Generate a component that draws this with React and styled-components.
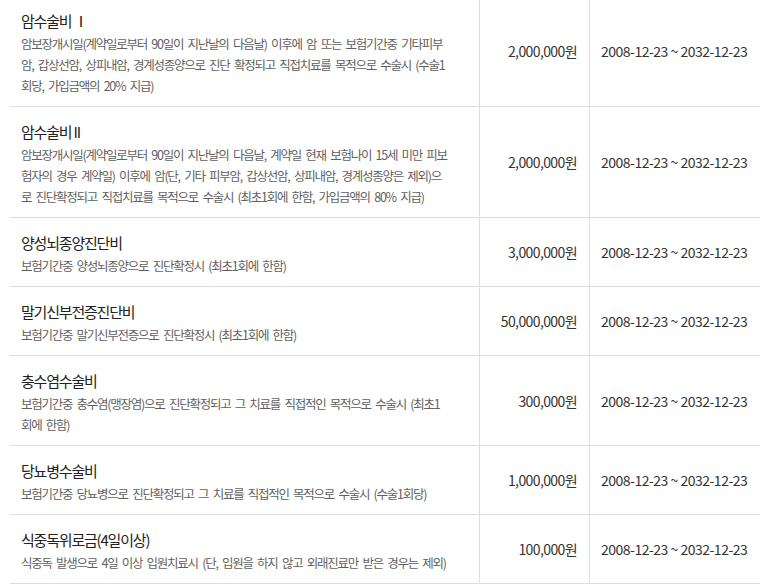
import styled, { createGlobalStyle } from 'styled-components';

const GlobalStyle = createGlobalStyle`
	body {
		margin: 0;
		background: #fff;
		font-family: 'Noto Sans CJK KR', 'Noto Sans', sans-serif;
	}
`;

const PERIOD = '2008-12-23 ~ 2032-12-23';

const rows = [
	{
		title: '암수술비 Ⅰ',
		desc: [
			'암보장개시일(계약일로부터 90일이 지난날의 다음날) 이후에 암 또는 보험기간중 기타피부',
			'암, 갑상선암, 상피내암, 경계성종양으로 진단 확정되고 직접치료를 목적으로 수술시 (수술1',
			'회당, 가입금액의 20% 지급)',
		],
		amount: '2,000,000원',
	},
	{
		title: '암수술비 II',
		desc: [
			'암보장개시일(계약일로부터 90일이 지난날의 다음날, 계약일 현재 보험나이 15세 미만 피보',
			'험자의 경우 계약일) 이후에 암(단, 기타 피부암, 갑상선암, 상피내암, 경계성종양은 제외)으',
			'로 진단확정되고 직접치료를 목적으로 수술시 (최초1회에 한함, 가입금액의 80% 지급)',
		],
		amount: '2,000,000원',
	},
	{
		title: '양성뇌종양진단비',
		desc: ['보험기간중 양성뇌종양으로 진단확정시 (최초1회에 한함)'],
		amount: '3,000,000원',
	},
	{
		title: '말기신부전증진단비',
		desc: ['보험기간중 말기신부전증으로 진단확정시 (최초1회에 한함)'],
		amount: '50,000,000원',
	},
	{
		title: '충수염수술비',
		desc: [
			'보험기간중 충수염(맹장염)으로 진단확정되고 그 치료를 직접적인 목적으로 수술시 (최초1',
			'회에 한함)',
		],
		amount: '300,000원',
	},
	{
		title: '당뇨병수술비',
		desc: ['보험기간중 당뇨병으로 진단확정되고 그 치료를 직접적인 목적으로 수술시 (수술1회당)'],
		amount: '1,000,000원',
	},
	{
		title: '식중독위로금(4일이상)',
		desc: ['식중독 발생으로 4일 이상 입원치료시 (단, 입원을 하지 않고 외래진료만 받은 경우는 제외)'],
		amount: '100,000원',
	},
];

const App = () => {
	return (
		<Wrapper>
			<GlobalStyle />
			<List>
				{rows.map(row => (
					<Row key={row.title}>
						<InfoCell>
							<Title>{row.title}</Title>
							<Desc>
								{row.desc.map((line, i) => (
									<Line key={i}>{line}</Line>
								))}
							</Desc>
						</InfoCell>
						<AmountCell>{row.amount}</AmountCell>
						<PeriodCell>{PERIOD}</PeriodCell>
					</Row>
				))}
			</List>
		</Wrapper>
	);
};
export default App;

const Wrapper = styled.div`
	padding: 0 7px 0 10px;
	margin-top: -4px;
`;
const List = styled.div`
	width: 750px;
	display: flex;
	flex-direction: column;
`;
const Row = styled.div`
	display: grid;
	grid-template-columns: 470px 110px 170px;
	border-bottom: 1px solid #dddddd;
`;
const InfoCell = styled.div`
	padding: 13px 10px 10px 11px;
	border-right: 1px solid #dddddd;
`;
const Title = styled.div`
	font-size: 15px;
	line-height: 24px;
	color: #222;
	letter-spacing: -1.2px;
`;
const Desc = styled.div`
	font-size: 12.5px;
	line-height: 21px;
	color: #5f5f5f;
	letter-spacing: -1.25px;
	word-spacing: 2.8px;
`;
const Line = styled.div`
	white-space: nowrap;
`;
const AmountCell = styled.div`
	display: flex;
	align-items: center;
	justify-content: flex-end;
	padding-right: 12px;
	font-size: 14px;
	color: #333;
	letter-spacing: -0.6px;
	border-right: 1px solid #dddddd;
	white-space: nowrap;
`;
const PeriodCell = styled.div`
	display: flex;
	align-items: center;
	padding-left: 11px;
	font-size: 14px;
	color: #333;
	letter-spacing: -0.5px;
	white-space: nowrap;
`;
